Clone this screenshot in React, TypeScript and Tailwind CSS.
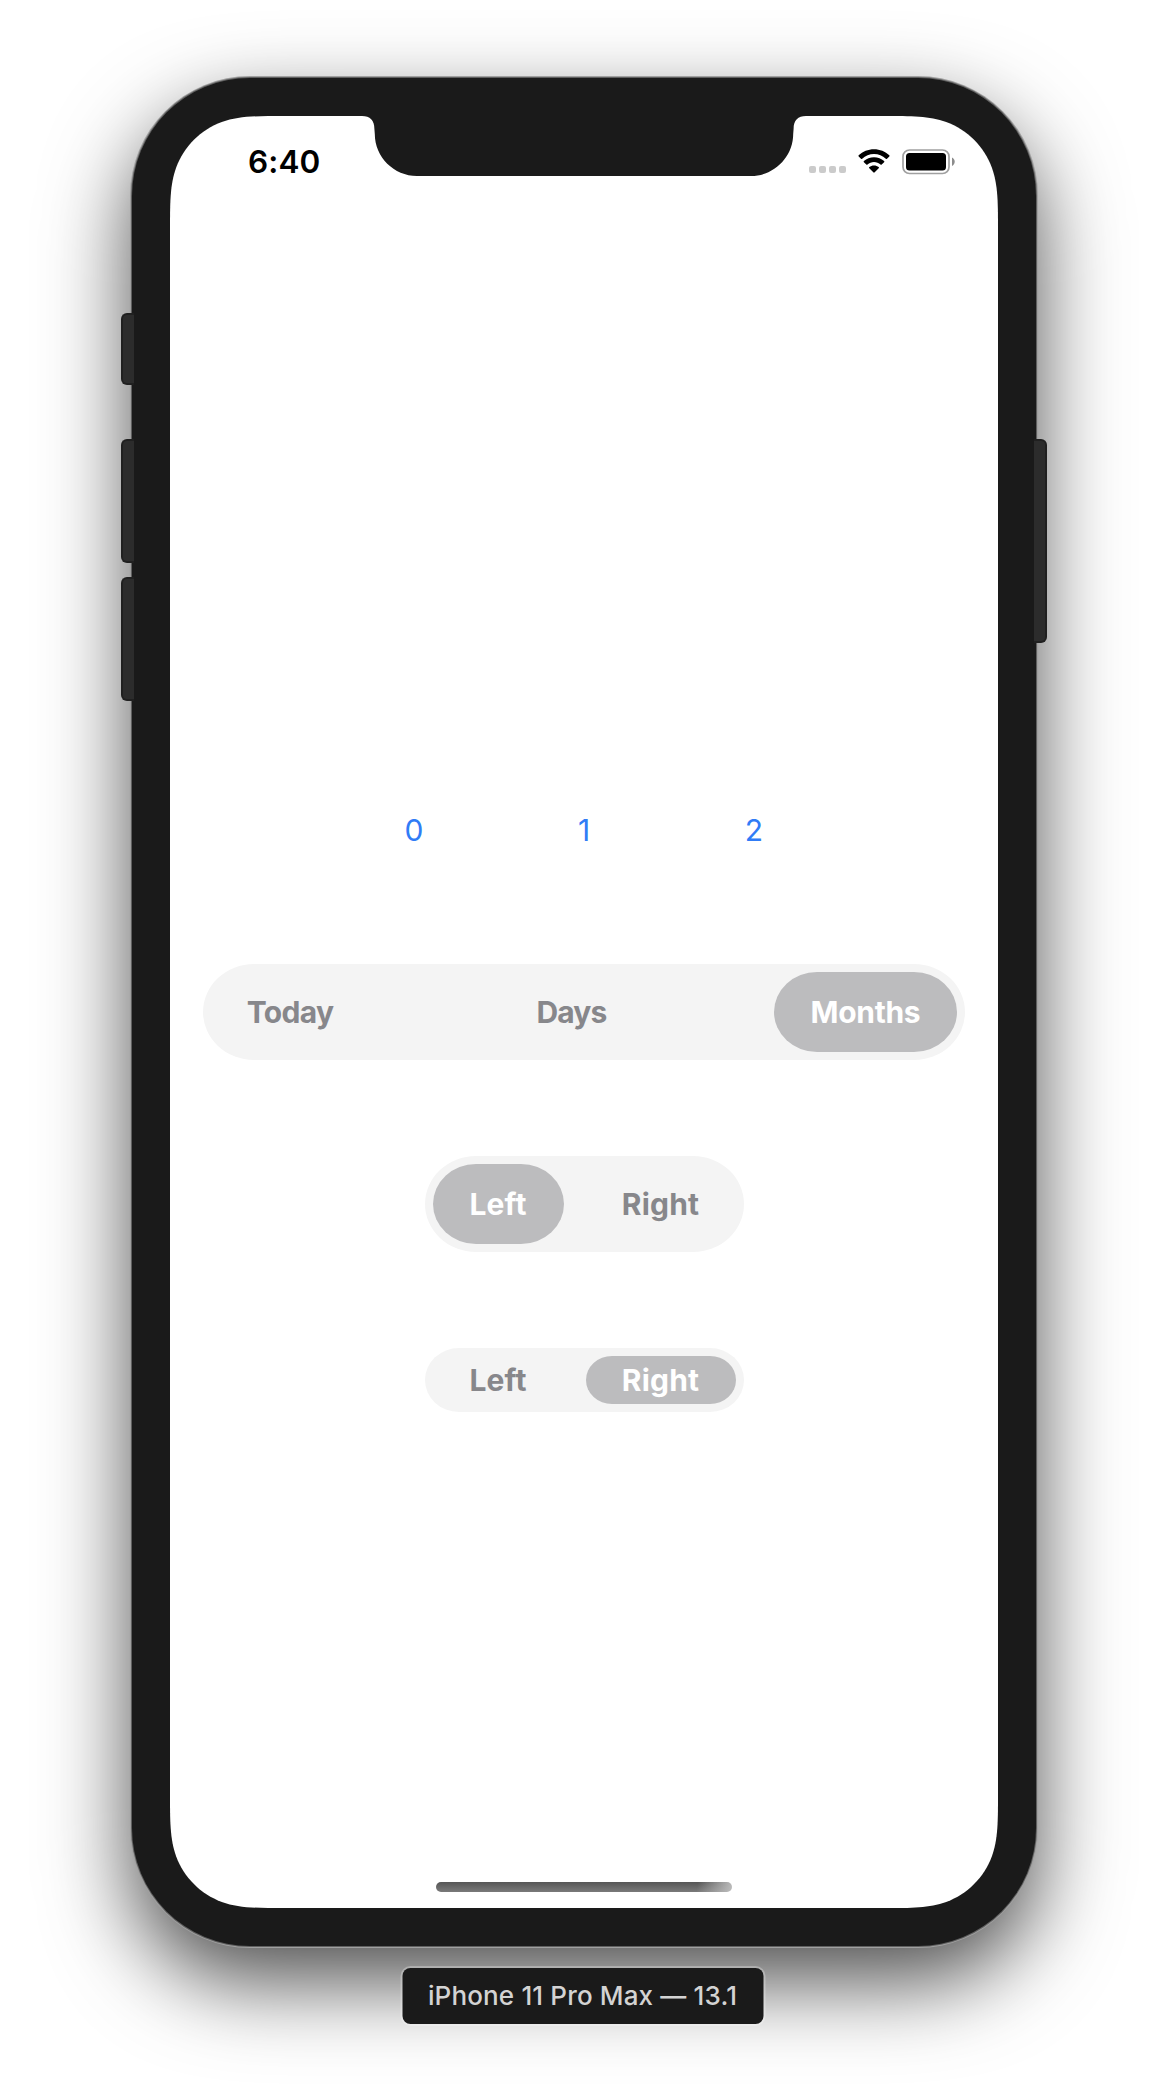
import React from "react";

type Segment = { label: string; width: string; tracking: string };

const TODAY: Segment = { label: "Today", width: "w-[158px]", tracking: "tracking-[-0.65px]" };
const DAYS: Segment = { label: "Days", width: "w-[141px]", tracking: "tracking-[-0.8px]" };
const MONTHS: Segment = { label: "Months", width: "w-[183px]", tracking: "tracking-[-0.3px]" };
const LEFT: Segment = { label: "Left", width: "w-[131px]", tracking: "tracking-[0.1px]" };
const RIGHT: Segment = { label: "Right", width: "w-[150px]", tracking: "tracking-[0.2px]" };

function SegmentedControl({
  segments,
  selected,
  className,
  pillClass,
}: {
  segments: Segment[];
  selected: number;
  className: string;
  pillClass: string;
}) {
  return (
    <div className={`flex justify-between bg-[#f4f4f4] p-2 ${className}`}>
      {segments.map((s, i) => (
        <button
          key={s.label}
          className={`flex h-full items-center justify-center text-[30px] font-[650] leading-none ${s.width} ${s.tracking} ${pillClass} ${
            i === selected ? "bg-[#bcbcbe] text-white" : "text-[#87878b]"
          }`}
        >
          {s.label}
        </button>
      ))}
    </div>
  );
}

function WifiIcon() {
  return (
    <svg width="32" height="24" viewBox="0 0 32 24" className="ml-[12px]">
      <path d="M16 .2C21.9 .2 27.3 2.5 31.300 6.200C31.700 6.600 31.700 7 31.300 7.400L29 9.700C28.600 10.100 28.200 10.100 27.800 9.700C24.700 6.800 20.500 5.100 16 5.100S7.300 6.800 4.200 9.700C3.800 10.100 3.400 10.100 3 9.700L.7 7.400C.3 7 .3 6.600 .7 6.200C4.700 2.500 10.100 .2 16 .2Z" />
      <path d="M16 8.200C19.900 8.200 23.400 9.600 26.100 12C26.500 12.400 26.500 12.800 26.100 13.200L23.700 15.500C23.300 15.900 22.900 15.900 22.500 15.500C20.700 14 18.500 13.100 16 13.100S11.300 14 9.500 15.500C9.100 15.900 8.700 15.900 8.300 15.500L5.900 13.200C5.500 12.800 5.500 12.400 5.900 12C8.600 9.600 12.100 8.200 16 8.200Z" />
      <path d="M16 16.500C17.800 16.500 19.400 17.100 20.700 18.100C21.100 18.500 21.100 18.900 20.700 19.300L16.700 23.300C16.200 23.800 15.800 23.800 15.300 23.300L11.300 19.300C10.900 18.900 10.900 18.500 11.300 18.100C12.600 17.100 14.200 16.500 16 16.500Z" />
    </svg>
  );
}

function BatteryIcon() {
  return (
    <svg width="54" height="26" viewBox="0 0 54 26" className="ml-[12px]">
      <rect x="1" y="1" width="46" height="23.500" rx="6.500" fill="none" stroke="#a0a0a0" strokeWidth="1.700" />
      <rect x="4" y="4" width="40" height="17.500" rx="3.500" />
      <path d="M50 8.500C51.600 9.200 52.700 10.800 52.700 12.700S51.600 16.200 50 16.900Z" fill="#8c8c8c" />
    </svg>
  );
}

function StatusBar() {
  return (
    <div className="flex h-[88px] items-start justify-between pl-[78px] pr-[42px] pt-[32px]">
      <div className="mt-px text-[31.500px] font-semibold leading-[26px] tracking-[0.1px] text-black">6:40</div>
      <div className="mt-px flex items-start">
        <div className="mt-[17px] flex gap-[3px]">
          {[0, 1, 2, 3].map((i) => (
            <span key={i} className="size-[7px] rounded-[2px] bg-[#cbcbcb]" />
          ))}
        </div>
        <WifiIcon />
        <BatteryIcon />
      </div>
    </div>
  );
}

function Notch() {
  return (
    <svg width="448" height="61" viewBox="0 0 448 61" className="absolute left-[190px] top-0">
      <path
        d="M0 0V-1H448V0H446C438 0 433.600 4 433.600 13L433.200 18C433.200 41 414 60 391 60H57C34 60 14.800 41 14.800 18L14.400 13C14.400 4 10 0 2 0Z"
        fill="#1a1a1a"
      />
    </svg>
  );
}

function SideButton({ className }: { className: string }) {
  return <div className={`absolute w-[13px] border-2 border-[#202020] bg-[#2c2c2c] ${className}`} />;
}

export default function App() {
  return (
    <div className="flex h-[2096px] w-[1168px] flex-col items-center overflow-hidden bg-white pt-[78px] font-['Inter',sans-serif]">
      <div className="relative h-[1868px] w-[904px] shrink-0 rounded-[118px] bg-[#1a1a1a] p-[38px] shadow-[0_0_0_1px_#5f5f5f,0_0_0_2px_#a0a0a0,0_35px_86px_rgba(0,0,0,0.7)]">
        <SideButton className="left-[-11px] top-[235px] h-[72px] rounded-l-[6px] border-r-0" />
        <SideButton className="left-[-11px] top-[361px] h-[124px] rounded-l-[6px] border-r-0" />
        <SideButton className="left-[-11px] top-[499px] h-[124px] rounded-l-[6px] border-r-0" />
        <SideButton className="right-[-11px] top-[361px] h-[204px] rounded-r-[6px] border-l-0" />

        <div className="relative flex h-[1792px] w-[828px] flex-col bg-white [clip-path:path('M115,0_C86,0_68.900,0_51.800,6.100_C30.600,13.900_13.900,30.600_6.100,51.800_C0,68.900_0,86_0,115_V1677_C0,1706_0,1723.100_6.100,1740.200_C13.900,1761.400_30.600,1778.100_51.800,1785.900_C68.900,1792_86,1792_115,1792_H713_C742,1792_759.100,1792_776.200,1785.900_C797.400,1778.100_814.100,1761.400_821.900,1740.200_C828,1723.100_828,1706_828,1677_V115_C828,86_828,68.900_821.900,51.800_C814.100,30.600_797.400,13.900_776.200,6.100_C759.100,0_742,0_713,0_Z')]">
          <StatusBar />
          <Notch />

          <main className="flex flex-1 flex-col items-center pt-[608px]">
            <div className="flex h-[36px] w-[360px] items-center justify-between text-[30px] leading-none text-[#307cf6]">
              <span className="w-5 text-center">0</span>
              <span className="w-5 text-center">1</span>
              <span className="w-5 text-center">2</span>
            </div>
            <SegmentedControl
              segments={[TODAY, DAYS, MONTHS]}
              selected={2}
              className="mt-[116px] h-[96px] w-[762px] rounded-[51px/48px]"
              pillClass="rounded-[43px/40px]"
            />
            <SegmentedControl
              segments={[LEFT, RIGHT]}
              selected={0}
              className="mt-[96px] h-[96px] w-[319px] rounded-[51px/48px]"
              pillClass="rounded-[43px/40px]"
            />
            <SegmentedControl
              segments={[LEFT, RIGHT]}
              selected={1}
              className="mt-[96px] h-[64px] w-[319px] rounded-[34px/32px]"
              pillClass="rounded-[26px/24px]"
            />
            <div className="mb-[16px] mt-auto h-[10px] w-[296px] rounded-full bg-[linear-gradient(100deg,transparent_88%,#bdbdbd_100%),linear-gradient(to_bottom,#565656,#7a7a7a)]" />
          </main>
        </div>
      </div>

      <div className="relative mt-[22px] flex h-[56px] w-[361px] -translate-x-[1.500px] items-center justify-center rounded-[8px] bg-[#1a1a1a] text-[26px] font-[450] leading-none tracking-[0.15px] text-[#d3d3d3] shadow-[0_0_0_2px_rgba(255,255,255,0.28)]">
        iPhone 11 Pro Max — 13.1
      </div>
    </div>
  );
}
